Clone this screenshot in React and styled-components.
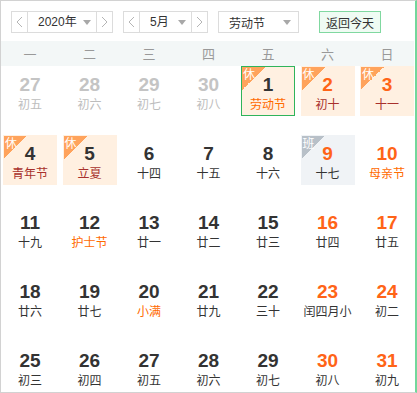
import React from "react"
import styled, { createGlobalStyle } from "styled-components"

const GlobalStyle = createGlobalStyle`
  body {
    margin: 0;
    background: #fff;
    font-family: "Liberation Sans", "Noto Sans CJK SC", sans-serif;
  }
`

const weekdays = ['一', '二', '三', '四', '五', '六', '日']

// kind: prev | rest | work ; fest = lunar text shown as festival
const days = [
  { n: 27, l: '初五', kind: 'prev' },
  { n: 28, l: '初六', kind: 'prev' },
  { n: 29, l: '初七', kind: 'prev' },
  { n: 30, l: '初八', kind: 'prev' },
  { n: 1, l: '劳动节', kind: 'rest', selected: true, fest: true },
  { n: 2, l: '初十', kind: 'rest', weekend: true },
  { n: 3, l: '十一', kind: 'rest', weekend: true },
  { n: 4, l: '青年节', kind: 'rest' },
  { n: 5, l: '立夏', kind: 'rest' },
  { n: 6, l: '十四' },
  { n: 7, l: '十五' },
  { n: 8, l: '十六' },
  { n: 9, l: '十七', kind: 'work', weekend: true },
  { n: 10, l: '母亲节', weekend: true, fest: true },
  { n: 11, l: '十九' },
  { n: 12, l: '护士节', fest: true },
  { n: 13, l: '廿一' },
  { n: 14, l: '廿二' },
  { n: 15, l: '廿三' },
  { n: 16, l: '廿四', weekend: true },
  { n: 17, l: '廿五', weekend: true },
  { n: 18, l: '廿六' },
  { n: 19, l: '廿七' },
  { n: 20, l: '小满', fest: true },
  { n: 21, l: '廿九' },
  { n: 22, l: '三十' },
  { n: 23, l: '闰四月小', weekend: true },
  { n: 24, l: '初二', weekend: true },
  { n: 25, l: '初三' },
  { n: 26, l: '初四' },
  { n: 27, l: '初五' },
  { n: 28, l: '初六' },
  { n: 29, l: '初七' },
  { n: 30, l: '初八', weekend: true },
  { n: 31, l: '初九', weekend: true },
]

const Chevron = ({ dir }) => (
  <svg width="7" height="12" viewBox="0 0 7 12">
    <path
      d={dir === 'left' ? 'M6 1 L1 6 L6 11' : 'M1 1 L6 6 L1 11'}
      fill="none"
      stroke="#b5b5b5"
      strokeWidth="1"
    />
  </svg>
)

const Caret = () => (
  <svg width="8" height="5" viewBox="0 0 8 5">
    <path d="M0 0 H8 L4 5 Z" fill="#a8a8a8" />
  </svg>
)

const numberColor = d => {
  if (d.kind === 'prev') return '#c4c4c4'
  if (d.weekend) return '#ff6417'
  return '#333'
}

const lunarColor = d => {
  if (d.kind === 'prev') return '#bdbdbd'
  if (d.fest) return '#ff6a00'
  if (d.kind === 'rest') return '#a8302c'
  return '#333'
}

const App = () => {
  return (
    <>
      <GlobalStyle />
      <Calendar>
        <Toolbar>
          <Picker>
            <ArrowCell><Chevron dir="left" /></ArrowCell>
            <PickerValue $width={68}>2020年<Caret /></PickerValue>
            <ArrowCell><Chevron dir="right" /></ArrowCell>
          </Picker>
          <Picker>
            <ArrowCell><Chevron dir="left" /></ArrowCell>
            <PickerValue $width={51}>5月<Caret /></PickerValue>
            <ArrowCell><Chevron dir="right" /></ArrowCell>
          </Picker>
          <HolidaySelect>劳动节<Caret /></HolidaySelect>
          <TodayButton>返回今天</TodayButton>
        </Toolbar>
        <WeekHead>
          {weekdays.map(w => <WeekName key={w}>{w}</WeekName>)}
        </WeekHead>
        <Grid>
          {days.map((d, i) => (
            <Cell key={i} $kind={d.kind} $selected={d.selected}>
              {d.kind === 'rest' && <Badge $work={false}>休</Badge>}
              {d.kind === 'work' && <Badge $work>班</Badge>}
              <DayNum $color={numberColor(d)}>{d.n}</DayNum>
              <Lunar $color={lunarColor(d)}>{d.l}</Lunar>
            </Cell>
          ))}
        </Grid>
      </Calendar>
    </>
  )
}

const Calendar = styled.div`
  width: 417px;
  height: 393px;
  box-sizing: border-box;
  border: 1px solid #d2d2d2;
  border-right: 2px solid #72d79b;
  background: #fff;
  overflow: hidden;
`

const Toolbar = styled.div`
  display: flex;
  align-items: center;
  padding: 10px 0 0 10px;
  height: 22px;
  font-size: 12px;
  color: #333;
`

const Picker = styled.div`
  display: flex;
  flex-shrink: 0;
  height: 22px;
  box-sizing: border-box;
  border: 1px solid #dcdcdc;
  margin-right: 10px;
`

const ArrowCell = styled.div`
  width: 15px;
  flex-shrink: 0;
  display: flex;
  align-items: center;
  justify-content: center;
  &:first-child { border-right: 1px solid #dcdcdc; }
  &:last-child { border-left: 1px solid #dcdcdc; }
`

const PickerValue = styled.div`
  width: ${p => p.$width}px;
  box-sizing: border-box;
  display: flex;
  align-items: center;
  justify-content: space-between;
  padding: 0 5px 0 10px;
  line-height: 20px;
`

const HolidaySelect = styled.div`
  width: 81px;
  height: 22px;
  box-sizing: border-box;
  border: 1px solid #dcdcdc;
  display: flex;
  align-items: center;
  justify-content: space-between;
  padding: 0 7px 0 10px;
  margin-right: 20px;
`

const TodayButton = styled.div`
  width: 62px;
  height: 22px;
  box-sizing: border-box;
  border: 1px solid #80d8a0;
  background: #effbf3;
  display: flex;
  align-items: center;
  justify-content: center;
  color: #333;
`

const WeekHead = styled.div`
  margin-top: 8px;
  height: 25px;
  background: #f3f7f7;
  display: grid;
  grid-template-columns: repeat(7, 54px);
  justify-content: space-between;
  padding: 0 0 0 2px;
  width: 411px;
  align-items: center;
`

const WeekName = styled.div`
  text-align: center;
  font-family: "Noto Sans CJK SC", sans-serif;
  font-size: 13px;
  color: #999;
`

const Grid = styled.div`
  display: grid;
  grid-template-columns: repeat(7, 54px);
  grid-auto-rows: 50px;
  row-gap: 19px;
  justify-content: space-between;
  padding: 0 0 0 2px;
  width: 411px;
`

const Cell = styled.div`
  position: relative;
  box-sizing: border-box;
  display: flex;
  flex-direction: column;
  align-items: center;
  padding-top: 8px;
  background: ${p => p.$kind === 'rest' ? '#fff0e1' : p.$kind === 'work' ? '#f0f3f6' : 'transparent'};
  border: 1px solid ${p => p.$selected ? '#2fb45b' : 'transparent'};
`

const Badge = styled.span`
  position: absolute;
  top: 0;
  left: 0;
  width: 23px;
  height: 23px;
  background: linear-gradient(135deg, ${p => p.$work ? '#b8c0c8' : '#ffa35c'} 50%, transparent 50%);
  color: #fff;
  font-family: "Noto Sans CJK SC", sans-serif;
  font-size: 12px;
  line-height: 14px;
  padding-left: 1px;
  box-sizing: border-box;
`

const DayNum = styled.div`
  font-weight: bold;
  font-size: 19px;
  line-height: 20px;
  color: ${p => p.$color};
`

const Lunar = styled.div`
  margin-top: 1px;
  font-family: "Noto Sans CJK SC", sans-serif;
  font-size: 12px;
  line-height: 16px;
  color: ${p => p.$color};
  white-space: nowrap;
`

export default App
